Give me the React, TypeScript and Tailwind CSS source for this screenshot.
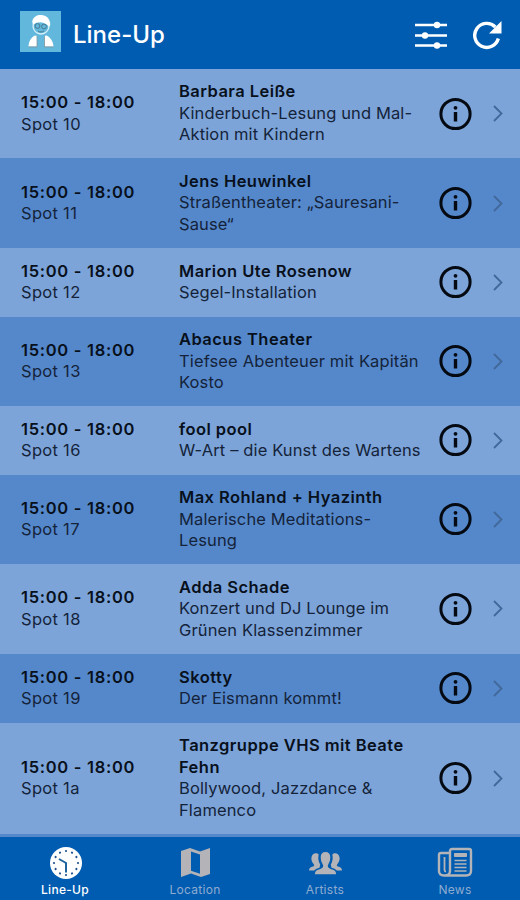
import React from "react";

type Act = { spot: string; name: string; lines: string[]; height: string };

const TIME = "15:00 - 18:00";

const acts: Act[] = [
  { spot: "Spot 10", name: "Barbara Leiße", lines: ["Kinderbuch-Lesung und Mal-", "Aktion mit Kindern"], height: "h-[89.3px]" },
  { spot: "Spot 11", name: "Jens Heuwinkel", lines: ["Straßentheater: „Sauresani-", "Sause“"], height: "h-[89.7px]" },
  { spot: "Spot 12", name: "Marion Ute Rosenow", lines: ["Segel-Installation"], height: "h-[68.6px]" },
  { spot: "Spot 13", name: "Abacus Theater", lines: ["Tiefsee Abenteuer mit Kapitän", "Kosto"], height: "h-[89.5px]" },
  { spot: "Spot 16", name: "fool pool", lines: ["W-Art – die Kunst des Wartens"], height: "h-[68.6px]" },
  { spot: "Spot 17", name: "Max Rohland + Hyazinth", lines: ["Malerische Meditations-", "Lesung"], height: "h-[89.5px]" },
  { spot: "Spot 18", name: "Adda Schade", lines: ["Konzert und DJ Lounge im", "Grünen Klassenzimmer"], height: "h-[89.5px]" },
  { spot: "Spot 19", name: "Skotty", lines: ["Der Eismann kommt!"], height: "h-[69px]" },
  { spot: "Spot 1a", name: "Tanzgruppe VHS mit Beate Fehn", lines: ["Bollywood, Jazzdance &", "Flamenco"], height: "h-[111px]" },
];

const App = () => {
  return (
    <div className="w-[520px] h-[900px] overflow-hidden flex flex-col bg-[#5488cb] font-['Inter','Liberation_Sans',sans-serif] text-[#08101c]">
      <header className="h-[69px] shrink-0 bg-[#005cb0] flex items-center pl-5 pr-[18px] text-white">
        <Logo />
        <h1 className="ml-3 text-[24px] leading-[30px] font-medium grow">
          Line-Up
        </h1>
        <button className="mr-[26px]">
          <OptionsIcon />
        </button>
        <button>
          <RefreshIcon />
        </button>
      </header>
      <main className="grow overflow-hidden">
        {acts.map((act, i) => (
          <Row key={act.spot} act={act} light={i % 2 === 0} />
        ))}
      </main>
      <nav className="h-[63px] shrink-0 bg-[#005cb0] grid grid-cols-4">
        <Tab title="Line-Up" icon={<ClockIcon />} active />
        <Tab title="Location" icon={<MapIcon />} />
        <Tab title="Artists" icon={<PeopleIcon />} />
        <Tab title="News" icon={<NewsIcon />} />
      </nav>
    </div>
  );
};

export default App;

const Row: React.FC<{ act: Act; light: boolean }> = ({ act, light }) => {
  return (
    <div
      className={`${act.height} ${light ? "bg-[#7ca4d8]" : "bg-[#5488cb]"} flex items-center pl-[21px] pr-[15px] text-[16.5px] leading-[21.5px]`}
    >
      <div className="w-[158px] shrink-0">
        <p className="font-semibold tracking-[0.7px]">{TIME}</p>
        <p className="tracking-[0.3px] text-[#14233a]">{act.spot}</p>
      </div>
      <div className="w-[250px] shrink-0">
        <p className="font-semibold tracking-[0.45px]">{act.name}</p>
        {act.lines.map((line) => (
          <p key={line} className="whitespace-nowrap tracking-[0.13px] text-[#14233a]">
            {line}
          </p>
        ))}
      </div>
      <svg className="w-[34px] h-[34px] ml-[9px] shrink-0" viewBox="0 0 34 34">
        <circle cx="17.500" cy="17" r="14.600" fill="none" stroke="#050a12" strokeWidth="3" />
        <circle cx="17.500" cy="10.800" r="1.900" fill="#050a12" />
        <path d="M15.800 15h3.400v9.500h-3.400z" fill="#050a12" />
      </svg>
      <svg className="w-[10px] h-[17px] ml-[21px] shrink-0" viewBox="0 0 10 17">
        <path d="M1 1l7.500 7.500L1 16" fill="none" stroke="#42689a" strokeWidth="1.800" />
      </svg>
    </div>
  );
};

const Tab: React.FC<{
  title: string;
  icon: React.ReactNode;
  active?: boolean;
}> = (props) => {
  return (
    <button
      className={`flex flex-col items-center pt-[9px] ${props.active ? "text-white" : "text-[#b3b3b8]"}`}
    >
      {props.icon}
      <span
        className={`mt-[2px] text-[12px] leading-[16px] tracking-[0.300px] ${props.active ? "font-medium" : "text-[#8fabd0]"}`}
      >
        {props.title}
      </span>
    </button>
  );
};

const Logo = () => (
  <svg className="w-[41px] h-[41px] -mt-[6px]" viewBox="0 0 41 41">
    <rect width="41" height="41" fill="#62b8dc" />
    <circle cx="21" cy="15" r="8" fill="#62b8dc" stroke="#d8f0f8" strokeWidth="1.300" />
    <path d="M12.500 12c-1-3 2-7.500 7-8 6-.8 10.500 3 10.800 9.500l-1.300 2.500c-2-3.500-5-4-8.500-4.800-3 .3-5 .3-7 2.300z" fill="#fff" />
    <g fill="none" stroke="#49788e" strokeWidth="1">
      <circle cx="17.500" cy="15" r="2.400" />
      <circle cx="24" cy="15.500" r="2.400" />
      <path d="M18 20c2 1.300 4 1.300 6 0" />
    </g>
    <path d="M15 24.500l2 .5v10.500H8.500c.3-5.500 2.500-9 6.500-11zM26.500 24.500l-2 .5v10.500h9c-.3-5.500-3-9-7-11z" fill="#fff" />
    <path d="M8.500 36h8.500V25M33.500 36h-9V25" fill="none" stroke="#82969d" strokeWidth=".8" />
  </svg>
);

const OptionsIcon = () => (
  <svg className="w-8 h-[30px]" viewBox="0 0 32 30" fill="currentColor">
    <path d="M0 3.800h32v2.500H0zM0 14.200h32v2.500H0zM0 24.300h32v2.500H0z" />
    <circle cx="22" cy="5" r="3.200" />
    <circle cx="10" cy="15.500" r="3.200" />
    <circle cx="22" cy="25.500" r="3.200" />
  </svg>
);

const RefreshIcon = () => (
  <svg className="w-[29px] h-[30px]" viewBox="0 0 29 30">
    <path d="M25.300 18.500A12 12 0 1 1 22.300 7" fill="none" stroke="currentColor" strokeWidth="3.400" />
    <path d="M28.500 1v12.500H16z" fill="currentColor" />
  </svg>
);

const TICKS = [0, 30, 60, 90, 120, 150, 180, 210, 240, 270, 300, 330];

const ClockIcon = () => (
  <svg className="w-[34px] h-[34px]" viewBox="0 0 34 34">
    <circle cx="18" cy="17" r="16" fill="currentColor" />
    {TICKS.map((deg) => (
      <circle key={deg} cx="18" cy="5" r="1.100" fill="#20518e" transform={`rotate(${deg} 18 17)`} />
    ))}
    <path d="M11 13l7 4v9.500" fill="none" stroke="#20649f" strokeWidth="2" />
  </svg>
);

const MapIcon = () => (
  <svg className="w-[34px] h-[34px]" viewBox="0 0 34 34" fill="currentColor">
    <path fillRule="evenodd" d="M3 5l9-3 10 3.500L32 2v26l-9 3-10-3.500L3 31zM13 5.500v19.300l9 3V8.500z" />
  </svg>
);

const PeopleIcon = () => (
  <svg className="w-[34px] h-[34px]" viewBox="0 0 34 34" fill="currentColor">
    <path d="M11 24.500H1c.2-2.800 1.500-3.200 4-4 1.500-.5 1.500-1.300.7-2.200-1.900-2.200-2.700-4.500-2.200-7C4 8.700 5.700 7.300 7.800 7.300c1.300 0 2.200.4 2.900 1.200-.9 3.600-.3 7 1.500 10z" />
    <path d="M24 24.500h10c-.2-2.800-1.500-3.200-4-4-1.500-.5-1.500-1.300-.7-2.200 1.900-2.200 2.700-4.500 2.200-7-.5-2.600-2.200-4-4.300-4-1.300 0-2.200.4-2.900 1.200.9 3.600.3 7-1.500 10z" />
    <path d="M6 29c.2-4.500 1.500-5.500 5.500-6.500 2.800-.8 3.600-2 2.400-4-1.400-2-2-4.300-2-7C11.900 7.600 14.200 5.200 17.500 5.200s5.600 2.400 5.600 6.300c0 2.700-.6 5-2 7-1.200 2-.4 3.200 2.400 4 4 1 5.300 2 5.500 6.500z" stroke="#005cb0" strokeWidth="1.600" />
  </svg>
);

const NewsIcon = () => (
  <svg className="w-[36px] h-[34px]" viewBox="0 0 36 34" fill="none" stroke="currentColor" strokeWidth="2.400">
    <path d="M13 7V5q0-2 2-2h17q2 0 2 2v20q0 4.500-5 4.500H7q-5 0-5-4.500V9q0-2 2-2h9v18q0 4.500-5 4.500" />
    <path d="M7.500 11v13q0 1.500 1.500 1.500" strokeWidth="1.800" />
    <path d="M17.500 14.500h12M17.500 18h12M17.500 21.500h12M17.500 25h12" strokeWidth="1.600" />
    <path d="M17.500 7.500h12v3h-12z" strokeWidth="1" fill="currentColor" />
  </svg>
);
